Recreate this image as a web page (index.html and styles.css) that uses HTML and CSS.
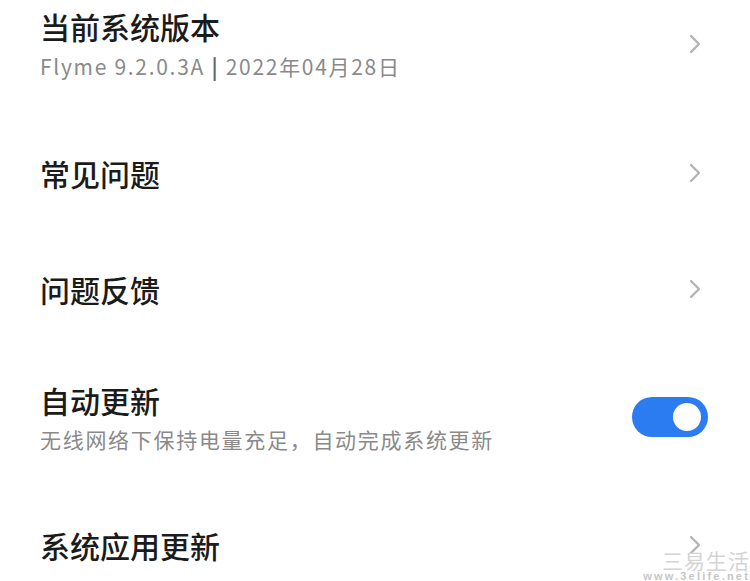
FILE: index.html
```html
<!DOCTYPE html>
<html lang="zh-CN">
<head>
  <meta charset="UTF-8">
  <meta name="viewport" content="width=device-width, initial-scale=1">
  <title>系统更新</title>
  <link rel="stylesheet" href="styles.css">
</head>
<body>
  <main class="settings">
    <!-- 当前版本 -->
    <div class="row row-tall">
      <div class="text">
        <div class="title">当前系统版本</div>
        <div class="sub">Flyme 9.2.0.3A <span class="bar">|</span> 2022年04月28日</div>
      </div>
      <svg class="chevron" viewBox="0 0 14 22"><path d="M3 3 L11 11 L3 19"/></svg>
    </div>
    <div class="row">
      <div class="text"><div class="title">常见问题</div></div>
      <svg class="chevron" viewBox="0 0 14 22"><path d="M3 3 L11 11 L3 19"/></svg>
    </div>
    <div class="row">
      <div class="text"><div class="title">问题反馈</div></div>
      <svg class="chevron" viewBox="0 0 14 22"><path d="M3 3 L11 11 L3 19"/></svg>
    </div>
    <!-- 自动更新开关 -->
    <div class="row row-tall row-switch">
      <div class="text">
        <div class="title">自动更新</div>
        <div class="sub sub-tight">无线网络下保持电量充足，自动完成系统更新</div>
      </div>
      <div class="switch on"><span class="knob"></span></div>
    </div>
    <div class="row">
      <div class="text"><div class="title">系统应用更新</div></div>
      <svg class="chevron" viewBox="0 0 14 22"><path d="M3 3 L11 11 L3 19"/></svg>
    </div>
  </main>
  <div class="watermark">
    <span class="wm-name">三易生活</span>
    <span class="wm-url">www.3elife.net</span>
  </div>
</body>
</html>
```

FILE: styles.css
```css
/* 基本 */
html, body {
  margin: 0;
  padding: 0;
  background: #fff;
  overflow: hidden;
}
body {
  font-family: "Noto Sans CJK SC", "Noto Sans", sans-serif;
  color: #1b1b1b;
  width: 750px;
  height: 581px;
  position: relative;
}
.settings {
  margin-top: -27px;
}
/* 列表行 */
.row {
  display: flex;
  align-items: center;
  justify-content: space-between;
  height: 116px;
  padding: 0 48px 0 40px;
  box-sizing: border-box;
}
.row-tall {
  height: 142px;
}
.row-switch {
  height: 140px;
  padding-right: 42px;
}
.text {
  display: flex;
  flex-direction: column;
}
.title {
  font-size: 30px;
  font-weight: 500;
  line-height: 36px;
}
.sub {
  font-size: 21px;
  letter-spacing: 1.7px;
  color: #8a8a8a;
  line-height: 28px;
  margin-top: 8px;
}
.sub .bar {
  color: #666;
  font-weight: bold;
}
.sub-tight {
  margin-top: 7px;
}
/* 箭头 */
.chevron {
  width: 14px;
  height: 22px;
  fill: none;
  stroke: #b4b4b4;
  stroke-width: 2.4;
  stroke-linecap: round;
  stroke-linejoin: round;
}
/* 开关 */
.switch {
  width: 76px;
  height: 40px;
  border-radius: 20px;
  background: #dcdcdc;
  position: relative;
}
.switch.on {
  background: #2a7cf0;
}
.knob {
  position: absolute;
  top: 6px;
  right: 7px;
  width: 28px;
  height: 28px;
  border-radius: 50%;
  background: #fff;
}
/* 水印 */
.watermark {
  position: absolute;
  right: 0;
  bottom: 0;
  display: flex;
  flex-direction: column;
  align-items: flex-end;
  color: #d4d4d4;
}
.wm-name {
  font-size: 21px;
  line-height: 22px;
  letter-spacing: 1px;
}
.wm-url {
  font-family: "Liberation Sans", sans-serif;
  font-size: 11px;
  font-weight: bold;
  line-height: 10px;
  letter-spacing: 2.2px;
  color: #c6c6c6;
}
```
